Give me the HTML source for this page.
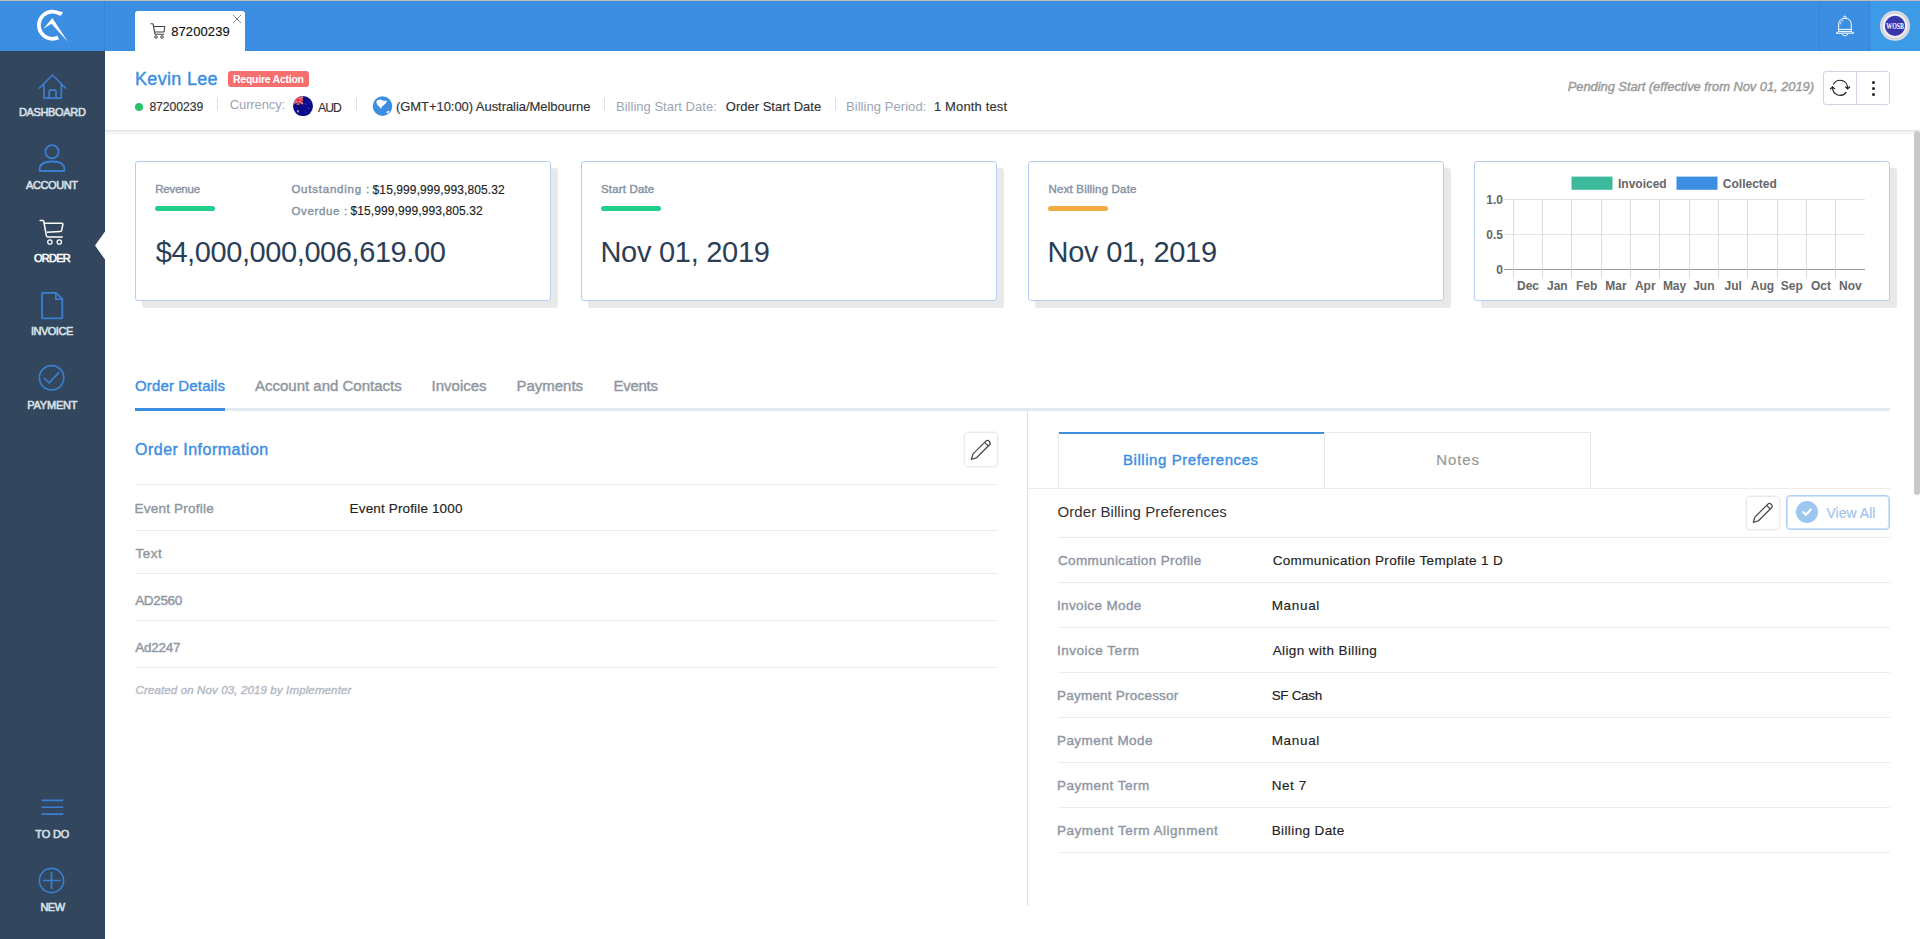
<!DOCTYPE html>
<html><head><meta charset="utf-8"><title>Order 87200239</title>
<style>
html,body{margin:0;padding:0;width:1920px;height:939px;overflow:hidden;background:#fff;font-family:"Liberation Sans",sans-serif}
body>div,body>svg,body>span{position:absolute;display:block}
.t{white-space:nowrap;line-height:1}
.ct{white-space:nowrap;line-height:1;font-weight:700}
</style></head><body>
<div style="left:0px;top:0px;width:1920px;height:1px;background:#c2baba"></div>
<div style="left:0px;top:1px;width:1920px;height:50px;background:#3b8ee2"></div>
<div style="left:1870px;top:1px;width:50px;height:50px;background:#3c9ae6"></div>
<div style="left:104px;top:1px;width:1px;height:50px;background:#3583d2"></div>
<div style="left:1819px;top:1px;width:1px;height:50px;background:#3583d2"></div>
<div style="left:1869px;top:1px;width:1px;height:50px;background:#3583d2"></div>
<div style="left:0px;top:51px;width:104px;height:888px;background:#32475e"></div>
<div style="left:104px;top:51px;width:1px;height:888px;background:#32475e"></div>
<svg style="left:94px;top:231px" width="11" height="29"><path d="M11 0.5 L1 14.5 L11 28.5 Z" fill="#fff"/></svg>
<div style="left:135px;top:11px;width:110px;height:40px;background:#fff;border-radius:3px 3px 0 0"></div>
<div style="left:105px;top:130px;width:1815px;height:1px;background:#e1e7ed"></div>
<div style="left:105px;top:131px;width:1815px;height:5px;background:linear-gradient(#efefef,rgba(255,255,255,0))"></div>
<div style="left:1914px;top:131px;width:6px;height:364px;background:#c9c9c9;border-radius:3px"></div>
<div style="left:228px;top:71px;width:81px;height:16px;background:#f56f6f;border-radius:3px"></div>
<div style="left:135px;top:103px;width:8px;height:8px;background:#27c46b;border-radius:50%"></div>
<div style="left:217px;top:98px;width:1px;height:12px;background:#dcdcdc"></div>
<div style="left:356px;top:98px;width:1px;height:12px;background:#dcdcdc"></div>
<div style="left:604px;top:98px;width:1px;height:12px;background:#dcdcdc"></div>
<div style="left:835px;top:98px;width:1px;height:12px;background:#dcdcdc"></div>
<div style="left:1823px;top:71px;width:67px;height:34px;border:1px solid #cdd4e2;border-radius:3px;box-sizing:border-box"></div>
<div style="left:1856px;top:71px;width:1px;height:34px;background:#cdd4e2"></div>
<div style="left:142px;top:168px;width:416px;height:140px;background:#e9e9e9;border-radius:3px"></div>
<div style="left:135px;top:161px;width:416px;height:140px;background:#fff;border:1px solid #b5cdf3;border-radius:3px;box-sizing:border-box"></div>
<div style="left:588px;top:168px;width:416px;height:140px;background:#e9e9e9;border-radius:3px"></div>
<div style="left:581px;top:161px;width:416px;height:140px;background:#fff;border:1px solid #b5cdf3;border-radius:3px;box-sizing:border-box"></div>
<div style="left:1035px;top:168px;width:416px;height:140px;background:#e9e9e9;border-radius:3px"></div>
<div style="left:1028px;top:161px;width:416px;height:140px;background:#fff;border:1px solid #b5cdf3;border-radius:3px;box-sizing:border-box"></div>
<div style="left:1481px;top:168px;width:416px;height:140px;background:#e9e9e9;border-radius:3px"></div>
<div style="left:1474px;top:161px;width:416px;height:140px;background:#fff;border:1px solid #b5cdf3;border-radius:3px;box-sizing:border-box"></div>
<div style="left:155px;top:206px;width:60px;height:5px;background:#22d08e;border-radius:3px"></div>
<div style="left:601px;top:206px;width:60px;height:5px;background:#22d08e;border-radius:3px"></div>
<div style="left:1048px;top:206px;width:60px;height:5px;background:#f2ab42;border-radius:3px"></div>
<div style="left:135px;top:408px;width:1755px;height:3px;background:#e4e9f1"></div>
<div style="left:135px;top:408px;width:90px;height:3px;background:#3b8ee2"></div>
<div style="left:964px;top:432px;width:34px;height:35px;border:1px solid #eaeaea;box-shadow:0 0 0 1px #f6f6f6;border-radius:4px;box-sizing:border-box"></div>
<div style="left:135px;top:484px;width:863px;height:1px;background:#ececec"></div>
<div style="left:135px;top:530px;width:863px;height:1px;background:#ececec"></div>
<div style="left:135px;top:573px;width:863px;height:1px;background:#ececec"></div>
<div style="left:135px;top:620px;width:863px;height:1px;background:#ececec"></div>
<div style="left:135px;top:667px;width:863px;height:1px;background:#ececec"></div>
<div style="left:1027px;top:411px;width:1px;height:495px;background:#dde1e6"></div>
<div style="left:1058px;top:432px;width:267px;height:57px;border:1px solid #e8e8e8;border-bottom:none;box-sizing:border-box"></div>
<div style="left:1324px;top:432px;width:267px;height:57px;border:1px solid #e8e8e8;border-bottom:none;box-sizing:border-box"></div>
<div style="left:1059px;top:432px;width:265px;height:2px;background:#3b8ee2"></div>
<div style="left:1028px;top:488px;width:862px;height:1px;background:#ececec"></div>
<div style="left:1746px;top:496px;width:34px;height:34px;border:1px solid #eaeaea;box-shadow:0 0 0 1px #f6f6f6;border-radius:4px;box-sizing:border-box"></div>
<div style="left:1786px;top:495px;width:104px;height:35px;border:1px solid #aecff3;box-shadow:inset 0 0 0 1px #cfe4f9;border-radius:4px;box-sizing:border-box"></div>
<div style="left:1796px;top:501px;width:22px;height:22px;background:#9ec7f0;border-radius:50%"></div>
<svg style="left:1800px;top:505px" width="14" height="14"><path d="M3.2 7.2 L6 9.8 L10.8 4.6" stroke="#fff" stroke-width="2.2" fill="none" stroke-linecap="round" stroke-linejoin="round"/></svg>
<div style="left:1058px;top:537px;width:832px;height:1px;background:#ececec"></div>
<div style="left:1058px;top:582px;width:832px;height:1px;background:#ececec"></div>
<div style="left:1058px;top:627px;width:832px;height:1px;background:#ececec"></div>
<div style="left:1058px;top:672px;width:832px;height:1px;background:#ececec"></div>
<div style="left:1058px;top:717px;width:832px;height:1px;background:#ececec"></div>
<div style="left:1058px;top:762px;width:832px;height:1px;background:#ececec"></div>
<div style="left:1058px;top:807px;width:832px;height:1px;background:#ececec"></div>
<div style="left:1058px;top:852px;width:832px;height:1px;background:#ececec"></div>
<svg style="left:30px;top:6px" width="45" height="40" viewBox="0 0 45 40">
<path d="M30.4 8.13 A13.6 13.6 0 1 0 28.25 31.5" stroke="#fff" stroke-width="3.7" fill="none"/>
<path d="M28 5.3 L33 6 L30.8 10.3 Z" fill="#fff"/>
<path d="M13.47 22.85 L22.4 12.06 L37.85 35.74 L21.44 17.69 Z" fill="#fff"/>
</svg>
<svg style="left:149px;top:22px" width="18" height="18" viewBox="0 0 18 18">
<path d="M1.5 1.8 L4 1.8 L6 12.2 L15 12.2 M4.6 4.5 L15.8 4.5 L15 10 L5.6 10" stroke="#444" stroke-width="1.1" fill="none" stroke-linejoin="round"/>
<circle cx="7" cy="15" r="1.3" stroke="#444" stroke-width="1" fill="none"/><circle cx="13" cy="15" r="1.3" stroke="#444" stroke-width="1" fill="none"/>
</svg>
<svg style="left:232px;top:14px" width="10" height="10"><path d="M1 1 L9 9 M9 1 L1 9" stroke="#888" stroke-width="1" fill="none"/></svg>
<svg style="left:36px;top:71px" width="33" height="30" viewBox="0 0 33 30">
<path d="M3.5 17 L16.5 4 L29.5 17" stroke="#3b7fd0" stroke-width="1.7" fill="none" stroke-linecap="round" stroke-linejoin="round"/>
<path d="M7.9 13 L7.9 26.2 Q7.9 27.2 8.9 27.2 L24.3 27.2 Q25.3 27.2 25.3 26.2 L25.3 13" stroke="#3b7fd0" stroke-width="1.7" fill="none"/>
<path d="M13.2 27 L13.2 20 Q13.2 19.2 14 19.2 L19.2 19.2 Q20 19.2 20 20 L20 27" stroke="#3b7fd0" stroke-width="1.7" fill="none"/>
</svg>
<svg style="left:35.6px;top:141px" width="33" height="33" viewBox="0 0 33 33">
<circle cx="16" cy="10.7" r="6.6" stroke="#3b7fd0" stroke-width="1.8" fill="none"/>
<path d="M3.5 29 Q3.5 20.5 16 20.5 Q28.5 20.5 28.5 29 Q28.5 30 27.5 30 L4.5 30 Q3.5 30 3.5 29 Z" stroke="#3b7fd0" stroke-width="1.8" fill="none"/>
</svg>
<svg style="left:36px;top:216px" width="32" height="32" viewBox="0 0 32 32">
<path d="M4.1 4.5 L6.8 4.5 Q7.6 4.6 7.8 5.5 L10.3 19.4 Q10.5 21 12 21 L26.2 21" stroke="#fff" stroke-width="1.5" fill="none" stroke-linecap="round"/>
<path d="M8.6 7.2 L25.8 7.2 Q27 7.4 26.8 8.6 L25.8 14.2 Q25.5 15.5 24.3 15.5 L10.9 16.3" stroke="#fff" stroke-width="1.5" fill="none"/>
<circle cx="13.9" cy="26" r="2.2" stroke="#fff" stroke-width="1.25" fill="none"/><circle cx="23.3" cy="26" r="2.2" stroke="#fff" stroke-width="1.25" fill="none"/>
</svg>
<svg style="left:36px;top:287.6px" width="32" height="34" viewBox="0 0 32 34">
<path d="M6 5.5 Q6 4.8 6.7 4.8 L20 4.8 L26.3 11 L26.3 29.5 Q26.3 30.3 25.5 30.3 L6.8 30.3 Q6 30.3 6 29.5 Z" stroke="#3b7fd0" stroke-width="1.8" fill="none" stroke-linejoin="round"/>
<path d="M19.8 5 L19.8 11.2 L26 11.2" stroke="#3b7fd0" stroke-width="1.6" fill="none"/>
</svg>
<svg style="left:36px;top:362px" width="32" height="32" viewBox="0 0 32 32">
<circle cx="15.6" cy="15.8" r="12.2" stroke="#3b7fd0" stroke-width="1.6" fill="none"/>
<path d="M8.3 16.2 L13 20.8 L22.8 10.6" stroke="#3b7fd0" stroke-width="1.6" fill="none" stroke-linecap="round"/>
</svg>
<svg style="left:36px;top:795px" width="32" height="24" viewBox="0 0 32 24">
<path d="M5.6 5.4 L27.3 5.4 M5.6 12.3 L27.3 12.3 M5.6 19.1 L27.3 19.1" stroke="#3b7fd0" stroke-width="1.6" fill="none"/>
</svg>
<svg style="left:36px;top:865px" width="32" height="32" viewBox="0 0 32 32">
<circle cx="15.5" cy="15.5" r="12.1" stroke="#3b7fd0" stroke-width="1.6" fill="none"/>
<path d="M6.9 15.5 L24.6 15.5 M15.5 7 L15.5 24" stroke="#3b7fd0" stroke-width="1.7" fill="none"/>
</svg>
<svg style="left:1833px;top:13px" width="24" height="26" viewBox="0 0 24 26">
<circle cx="11.9" cy="4.3" r="1.25" stroke="#fff" stroke-width="0.9" fill="none"/>
<path d="M5.6 18.7 L5.6 12 Q5.6 5.3 11.9 5.3 Q18.3 5.3 18.3 12 L18.3 18.7" stroke="#fff" stroke-width="1" fill="none"/>
<path d="M7.2 11.5 Q7.5 7.6 10.5 7.1" stroke="#fff" stroke-width="0.7" fill="none"/>
<path d="M5.6 16.4 L18.3 16.4 M5.6 18.6 L18.3 18.6 L20.9 20.2 L3.1 20.2 Z" stroke="#fff" stroke-width="1" fill="none" stroke-linejoin="round"/>
<path d="M8.9 20.4 Q9.4 22.9 11.9 22.9 Q14.4 22.9 14.9 20.4" stroke="#fff" stroke-width="1" fill="none"/>
</svg>
<svg style="left:1879px;top:10px" width="32" height="32" viewBox="0 0 32 32">
<circle cx="16" cy="15.8" r="15" fill="#dedee6"/><circle cx="16" cy="15.8" r="13" stroke="#b4b4bc" stroke-width="0.8" stroke-dasharray="1.2 0.8" fill="none"/>
<circle cx="16" cy="15.8" r="12" fill="#f0f0f4"/><circle cx="16" cy="15.8" r="10.1" fill="#3636aa"/>
<text x="7.3" y="19.1" font-family="Liberation Serif" font-weight="700" font-size="8.6" fill="#fff" textLength="17.6" lengthAdjust="spacingAndGlyphs">WOSB</text>
</svg>
<svg style="left:293px;top:96px" width="20" height="20" viewBox="0 0 20 20">
<defs><clipPath id="fc"><circle cx="10" cy="10.1" r="10"/></clipPath></defs>
<g clip-path="url(#fc)"><rect width="20" height="20" fill="#0c0c88"/>
<path d="M0 0.5 L10 8 M10 0.5 L0 8" stroke="#f08080" stroke-width="1.8"/>
<path d="M5 0 L5 9 M0 4 L10 4" stroke="#f7a0a0" stroke-width="2.6"/><path d="M5 0 L5 9 M0 4 L10 4" stroke="#ee2030" stroke-width="1.5"/>
<path d="M0 8.5 L3 6" stroke="#6c6cc0" stroke-width="0.8"/>
<ellipse cx="5" cy="15.3" rx="0.7" ry="1.4" fill="#c8c8ee"/><circle cx="13" cy="8" r="0.6" fill="#8888cc"/><circle cx="16" cy="6" r="0.6" fill="#6a6ac0"/><circle cx="15.3" cy="12" r="0.6" fill="#6a6ac0"/><circle cx="12.5" cy="16" r="0.5" fill="#6a6ac0"/></g>
</svg>
<svg style="left:372px;top:96px" width="21" height="21" viewBox="0 0 21 21">
<circle cx="10.5" cy="10.1" r="9.8" fill="#3b8ee2"/>
<path d="M4.6 5 Q5.5 3.6 7.7 3.4 L10 3.9 Q11 4.6 12 4.9 L13.6 4.6 Q15.2 5.2 14.6 6.6 Q13.8 7.6 12.4 8.6 Q11 9.4 10.2 10.6 Q9.6 11.6 8.6 12.8 Q7.6 11.2 7.1 10.2 Q5.8 9.4 5.1 8.4 Q4.2 6.8 4.6 5 Z" fill="#fff"/>
<ellipse cx="15.9" cy="16" rx="1.5" ry="0.9" transform="rotate(-40 15.9 16)" fill="#fff"/>
</svg>
<svg style="left:1829px;top:77px" width="22" height="22" viewBox="0 0 22 22">
<path d="M4.3 7.63 A7.5 7.5 0 0 1 18.6 11.06" stroke="#1a1a1a" stroke-width="1.15" fill="none"/>
<path d="M16.3 9.7 L18.6 12 L21 9.5" stroke="#1a1a1a" stroke-width="1.15" fill="none" stroke-linejoin="miter"/>
<path d="M17.25 15.1 A7.5 7.5 0 0 1 3.6 10.8" stroke="#1a1a1a" stroke-width="1.15" fill="none"/>
<path d="M1.2 12.4 L3.5 9.9 L6 12.1" stroke="#1a1a1a" stroke-width="1.15" fill="none"/>
</svg>
<div style="left:1871.5px;top:80.5px;width:3px;height:3px;background:#222;border-radius:50%"></div>
<div style="left:1871.5px;top:87.0px;width:3px;height:3px;background:#222;border-radius:50%"></div>
<div style="left:1871.5px;top:93.1px;width:3px;height:3px;background:#222;border-radius:50%"></div>
<svg style="left:969px;top:438px" width="24" height="24" viewBox="0 0 24 24">
<g transform="translate(12 12) scale(1.22) translate(-12 -12)">
<path d="M5.5 15.2 L15.8 4.9 Q17.3 3.4 18.8 4.9 Q20.3 6.4 18.8 7.9 L8.5 18.2 L4.6 19.6 Q4 19.8 4.2 19.2 Z" stroke="#4a4a4a" stroke-width="1.05" fill="none" stroke-linejoin="round"/>
<path d="M15 5.8 L17.9 8.7" stroke="#4a4a4a" stroke-width="1" fill="none"/></g>
</svg>
<svg style="left:1751px;top:501px" width="24" height="24" viewBox="0 0 24 24">
<g transform="translate(12 12) scale(1.22) translate(-12 -12)">
<path d="M5.5 15.2 L15.8 4.9 Q17.3 3.4 18.8 4.9 Q20.3 6.4 18.8 7.9 L8.5 18.2 L4.6 19.6 Q4 19.8 4.2 19.2 Z" stroke="#4a4a4a" stroke-width="1.05" fill="none" stroke-linejoin="round"/>
<path d="M15 5.8 L17.9 8.7" stroke="#4a4a4a" stroke-width="1" fill="none"/></g>
</svg>
<svg style="left:1474px;top:161px" width="416" height="140" viewBox="0 0 416 140">
<rect x="97.5" y="15.6" width="41" height="13.2" fill="#3cb89b"/>
<rect x="202.5" y="15.6" width="41" height="13.2" fill="#3b8ee2"/>
<line x1="30" y1="38.5" x2="391" y2="38.5" stroke="#e3e3e3" stroke-width="1"/>
<line x1="30" y1="73.5" x2="391" y2="73.5" stroke="#e3e3e3" stroke-width="1"/>
<line x1="30" y1="108.5" x2="391" y2="108.5" stroke="#9a9a9a" stroke-width="1"/>
<line x1="39.5" y1="38.5" x2="39.5" y2="118.0" stroke="#dcdcdc" stroke-width="1"/>
<line x1="68.5" y1="38.5" x2="68.5" y2="118.0" stroke="#dcdcdc" stroke-width="1"/>
<line x1="97.5" y1="38.5" x2="97.5" y2="118.0" stroke="#dcdcdc" stroke-width="1"/>
<line x1="127.5" y1="38.5" x2="127.5" y2="118.0" stroke="#dcdcdc" stroke-width="1"/>
<line x1="156.5" y1="38.5" x2="156.5" y2="118.0" stroke="#dcdcdc" stroke-width="1"/>
<line x1="185.5" y1="38.5" x2="185.5" y2="118.0" stroke="#dcdcdc" stroke-width="1"/>
<line x1="215.5" y1="38.5" x2="215.5" y2="118.0" stroke="#dcdcdc" stroke-width="1"/>
<line x1="244.5" y1="38.5" x2="244.5" y2="118.0" stroke="#dcdcdc" stroke-width="1"/>
<line x1="273.5" y1="38.5" x2="273.5" y2="118.0" stroke="#dcdcdc" stroke-width="1"/>
<line x1="303.5" y1="38.5" x2="303.5" y2="118.0" stroke="#dcdcdc" stroke-width="1"/>
<line x1="332.5" y1="38.5" x2="332.5" y2="118.0" stroke="#dcdcdc" stroke-width="1"/>
<line x1="361.5" y1="38.5" x2="361.5" y2="118.0" stroke="#dcdcdc" stroke-width="1"/>
</svg>
<span class="ct" style="left:1618px;top:177.6px;font-size:12px;color:#666">Invoiced</span>
<span class="ct" style="left:1722.8px;top:177.6px;font-size:12px;color:#666">Collected</span>
<span class="ct" style="left:1383px;top:194.2px;width:120px;text-align:right;font-size:12px;color:#666">1.0</span>
<span class="ct" style="left:1383px;top:228.9px;width:120px;text-align:right;font-size:12px;color:#666">0.5</span>
<span class="ct" style="left:1383px;top:263.6px;width:120px;text-align:right;font-size:12px;color:#666">0</span>
<span class="ct" style="left:1468.0500000000002px;top:280.0px;width:120px;text-align:center;font-size:12px;color:#666">Dec</span>
<span class="ct" style="left:1497.3500000000001px;top:280.0px;width:120px;text-align:center;font-size:12px;color:#666">Jan</span>
<span class="ct" style="left:1526.65px;top:280.0px;width:120px;text-align:center;font-size:12px;color:#666">Feb</span>
<span class="ct" style="left:1555.95px;top:280.0px;width:120px;text-align:center;font-size:12px;color:#666">Mar</span>
<span class="ct" style="left:1585.25px;top:280.0px;width:120px;text-align:center;font-size:12px;color:#666">Apr</span>
<span class="ct" style="left:1614.5500000000002px;top:280.0px;width:120px;text-align:center;font-size:12px;color:#666">May</span>
<span class="ct" style="left:1643.8500000000001px;top:280.0px;width:120px;text-align:center;font-size:12px;color:#666">Jun</span>
<span class="ct" style="left:1673.15px;top:280.0px;width:120px;text-align:center;font-size:12px;color:#666">Jul</span>
<span class="ct" style="left:1702.45px;top:280.0px;width:120px;text-align:center;font-size:12px;color:#666">Aug</span>
<span class="ct" style="left:1731.75px;top:280.0px;width:120px;text-align:center;font-size:12px;color:#666">Sep</span>
<span class="ct" style="left:1761.0500000000002px;top:280.0px;width:120px;text-align:center;font-size:12px;color:#666">Oct</span>
<span class="ct" style="left:1790.3500000000001px;top:280.0px;width:120px;text-align:center;font-size:12px;color:#666">Nov</span>
<span class="t" style="left:18.9px;top:107.3px;font-size:11px;font-weight:400;font-style:normal;color:#dde2e8;letter-spacing:-0.338px;-webkit-text-stroke:0.55px #dde2e8">DASHBOARD</span>
<span class="t" style="left:26.0px;top:180.3px;font-size:11px;font-weight:400;font-style:normal;color:#dde2e8;letter-spacing:-0.383px;-webkit-text-stroke:0.55px #dde2e8">ACCOUNT</span>
<span class="t" style="left:34.0px;top:253.3px;font-size:11px;font-weight:400;font-style:normal;color:#ffffff;letter-spacing:-0.75px;-webkit-text-stroke:0.55px #ffffff">ORDER</span>
<span class="t" style="left:30.9px;top:326.3px;font-size:11px;font-weight:400;font-style:normal;color:#dde2e8;letter-spacing:-0.483px;-webkit-text-stroke:0.55px #dde2e8">INVOICE</span>
<span class="t" style="left:27.3px;top:400.0px;font-size:11px;font-weight:400;font-style:normal;color:#dde2e8;letter-spacing:-0.233px;-webkit-text-stroke:0.55px #dde2e8">PAYMENT</span>
<span class="t" style="left:35.3px;top:829.0px;font-size:11px;font-weight:400;font-style:normal;color:#dde2e8;letter-spacing:-0.175px;-webkit-text-stroke:0.55px #dde2e8">TO DO</span>
<span class="t" style="left:40.4px;top:902.3px;font-size:11px;font-weight:400;font-style:normal;color:#dde2e8;letter-spacing:-0.5px;-webkit-text-stroke:0.55px #dde2e8">NEW</span>
<span class="t" style="left:171.2px;top:25.2px;font-size:13px;font-weight:400;font-style:normal;color:#111111;letter-spacing:0.107px;-webkit-text-stroke:0.15px #111111">87200239</span>
<span class="t" style="left:135.0px;top:70.0px;font-size:18px;font-weight:400;font-style:normal;color:#3b8ee2;letter-spacing:0.312px;-webkit-text-stroke:0.4px #3b8ee2">Kevin Lee</span>
<span class="t" style="left:233.0px;top:74.1px;font-size:10.5px;font-weight:700;font-style:normal;color:#ffffff;letter-spacing:-0.25px">Require Action</span>
<span class="t" style="left:149.4px;top:100.6px;font-size:12.2px;font-weight:400;font-style:normal;color:#333333;letter-spacing:-0.057px;-webkit-text-stroke:0.15px #333333">87200239</span>
<span class="t" style="left:229.8px;top:97.8px;font-size:13px;font-weight:400;font-style:normal;color:#9da5b4;letter-spacing:-0.125px">Currency:</span>
<span class="t" style="left:318.0px;top:101.5px;font-size:12.2px;font-weight:400;font-style:normal;color:#333333;letter-spacing:-1.0px;-webkit-text-stroke:0.15px #333333">AUD</span>
<span class="t" style="left:396.0px;top:100.2px;font-size:13px;font-weight:400;font-style:normal;color:#333333;letter-spacing:-0.057px;-webkit-text-stroke:0.15px #333333">(GMT+10:00) Australia/Melbourne</span>
<span class="t" style="left:616.0px;top:100.2px;font-size:13px;font-weight:400;font-style:normal;color:#9da5b4;letter-spacing:0.017px">Billing Start Date:</span>
<span class="t" style="left:725.8px;top:100.2px;font-size:13px;font-weight:400;font-style:normal;color:#333333;letter-spacing:0.0px;-webkit-text-stroke:0.15px #333333">Order Start Date</span>
<span class="t" style="left:846.0px;top:100.2px;font-size:13px;font-weight:400;font-style:normal;color:#9da5b4;letter-spacing:0.057px">Billing Period:</span>
<span class="t" style="left:934.0px;top:100.2px;font-size:13px;font-weight:400;font-style:normal;color:#333333;letter-spacing:0.136px;-webkit-text-stroke:0.15px #333333">1 Month test</span>
<span class="t" style="left:1567.7px;top:80.0px;font-size:13px;font-weight:400;font-style:italic;color:#9a9a9a;letter-spacing:-0.088px;-webkit-text-stroke:0.4px #9a9a9a">Pending Start (effective from Nov 01, 2019)</span>
<span class="t" style="left:155.2px;top:184.0px;font-size:11.5px;font-weight:400;font-style:normal;color:#8592a3;letter-spacing:-0.167px;-webkit-text-stroke:0.4px #8592a3">Revenue</span>
<span class="t" style="left:291.4px;top:184.2px;font-size:11.5px;font-weight:400;font-style:normal;color:#8592a3;letter-spacing:0.775px;-webkit-text-stroke:0.4px #8592a3">Outstanding :</span>
<span class="t" style="left:372.6px;top:183.5px;font-size:12px;font-weight:400;font-style:normal;color:#222222;letter-spacing:0.095px;-webkit-text-stroke:0.15px #222222">$15,999,999,993,805.32</span>
<span class="t" style="left:291.4px;top:206.1px;font-size:11.5px;font-weight:400;font-style:normal;color:#8592a3;letter-spacing:0.65px;-webkit-text-stroke:0.4px #8592a3">Overdue :</span>
<span class="t" style="left:350.5px;top:205.1px;font-size:12px;font-weight:400;font-style:normal;color:#222222;letter-spacing:0.095px;-webkit-text-stroke:0.15px #222222">$15,999,999,993,805.32</span>
<span class="t" style="left:155.7px;top:237.5px;font-size:29px;font-weight:400;font-style:normal;color:#2b3e55;letter-spacing:-0.41px">$4,000,000,006,619.00</span>
<span class="t" style="left:601.0px;top:184.2px;font-size:11.5px;font-weight:400;font-style:normal;color:#8592a3;letter-spacing:0.156px;-webkit-text-stroke:0.4px #8592a3">Start Date</span>
<span class="t" style="left:600.4px;top:237.6px;font-size:29px;font-weight:400;font-style:normal;color:#2b3e55;letter-spacing:-0.273px">Nov 01, 2019</span>
<span class="t" style="left:1048.6px;top:184.2px;font-size:11.5px;font-weight:400;font-style:normal;color:#8592a3;letter-spacing:0.175px;-webkit-text-stroke:0.4px #8592a3">Next Billing Date</span>
<span class="t" style="left:1047.6px;top:237.6px;font-size:29px;font-weight:400;font-style:normal;color:#2b3e55;letter-spacing:-0.273px">Nov 01, 2019</span>
<span class="t" style="left:135.0px;top:377.6px;font-size:15px;font-weight:400;font-style:normal;color:#3b8ee2;letter-spacing:0.142px;-webkit-text-stroke:0.4px #3b8ee2">Order Details</span>
<span class="t" style="left:255.0px;top:377.6px;font-size:15px;font-weight:400;font-style:normal;color:#8e96a0;letter-spacing:-0.005px;-webkit-text-stroke:0.4px #8e96a0">Account and Contacts</span>
<span class="t" style="left:431.5px;top:377.6px;font-size:15px;font-weight:400;font-style:normal;color:#8e96a0;letter-spacing:0.014px;-webkit-text-stroke:0.4px #8e96a0">Invoices</span>
<span class="t" style="left:516.5px;top:377.6px;font-size:15px;font-weight:400;font-style:normal;color:#8e96a0;letter-spacing:-0.014px;-webkit-text-stroke:0.4px #8e96a0">Payments</span>
<span class="t" style="left:613.4px;top:377.6px;font-size:15px;font-weight:400;font-style:normal;color:#8e96a0;letter-spacing:-0.26px;-webkit-text-stroke:0.4px #8e96a0">Events</span>
<span class="t" style="left:135.0px;top:441.7px;font-size:16px;font-weight:400;font-style:normal;color:#3b8ee2;letter-spacing:0.488px;-webkit-text-stroke:0.4px #3b8ee2">Order Information</span>
<span class="t" style="left:134.5px;top:501.8px;font-size:13.5px;font-weight:400;font-style:normal;color:#8e97a3;letter-spacing:0.225px;-webkit-text-stroke:0.4px #8e97a3">Event Profile</span>
<span class="t" style="left:349.6px;top:501.8px;font-size:13.5px;font-weight:400;font-style:normal;color:#222222;letter-spacing:0.147px;-webkit-text-stroke:0.15px #222222">Event Profile 1000</span>
<span class="t" style="left:135.5px;top:547.4px;font-size:13.5px;font-weight:400;font-style:normal;color:#8e97a3;letter-spacing:0.467px;-webkit-text-stroke:0.4px #8e97a3">Text</span>
<span class="t" style="left:135.2px;top:593.7px;font-size:13.5px;font-weight:400;font-style:normal;color:#8e97a3;letter-spacing:-0.34px;-webkit-text-stroke:0.4px #8e97a3">AD2560</span>
<span class="t" style="left:135.2px;top:641.0px;font-size:13.5px;font-weight:400;font-style:normal;color:#8e97a3;letter-spacing:-0.24px;-webkit-text-stroke:0.4px #8e97a3">Ad2247</span>
<span class="t" style="left:135.5px;top:684.7px;font-size:11.5px;font-weight:400;font-style:italic;color:#b3bac4;letter-spacing:0.132px;-webkit-text-stroke:0.4px #b3bac4">Created on Nov 03, 2019 by Implementer</span>
<span class="t" style="left:1123.0px;top:451.8px;font-size:15px;font-weight:400;font-style:normal;color:#3b8ee2;letter-spacing:0.556px;-webkit-text-stroke:0.4px #3b8ee2">Billing Preferences</span>
<span class="t" style="left:1436.2px;top:452.3px;font-size:15px;font-weight:400;font-style:normal;color:#999999;letter-spacing:0.9px;-webkit-text-stroke:0.2px #999999">Notes</span>
<span class="t" style="left:1057.5px;top:504.4px;font-size:15px;font-weight:400;font-style:normal;color:#333333;letter-spacing:0.075px">Order Billing Preferences</span>
<span class="t" style="left:1826.4px;top:505.5px;font-size:14px;font-weight:400;font-style:normal;color:#9cc4ee;letter-spacing:0.043px;-webkit-text-stroke:0.15px #9cc4ee">View All</span>
<span class="t" style="left:1058.0px;top:553.7px;font-size:13.5px;font-weight:400;font-style:normal;color:#8e97a3;letter-spacing:0.37px;-webkit-text-stroke:0.4px #8e97a3">Communication Profile</span>
<span class="t" style="left:1272.7px;top:553.7px;font-size:13.5px;font-weight:400;font-style:normal;color:#222222;letter-spacing:0.339px;-webkit-text-stroke:0.15px #222222">Communication Profile Template 1 D</span>
<span class="t" style="left:1057.0px;top:598.8px;font-size:13.5px;font-weight:400;font-style:normal;color:#8e97a3;letter-spacing:0.364px;-webkit-text-stroke:0.4px #8e97a3">Invoice Mode</span>
<span class="t" style="left:1271.7px;top:598.8px;font-size:13.5px;font-weight:400;font-style:normal;color:#222222;letter-spacing:0.68px;-webkit-text-stroke:0.15px #222222">Manual</span>
<span class="t" style="left:1057.0px;top:643.9px;font-size:13.5px;font-weight:400;font-style:normal;color:#8e97a3;letter-spacing:0.509px;-webkit-text-stroke:0.4px #8e97a3">Invoice Term</span>
<span class="t" style="left:1272.7px;top:643.9px;font-size:13.5px;font-weight:400;font-style:normal;color:#222222;letter-spacing:0.388px;-webkit-text-stroke:0.15px #222222">Align with Billing</span>
<span class="t" style="left:1057.0px;top:688.9px;font-size:13.5px;font-weight:400;font-style:normal;color:#8e97a3;letter-spacing:0.219px;-webkit-text-stroke:0.4px #8e97a3">Payment Processor</span>
<span class="t" style="left:1271.7px;top:688.9px;font-size:13.5px;font-weight:400;font-style:normal;color:#222222;letter-spacing:-0.333px;-webkit-text-stroke:0.15px #222222">SF Cash</span>
<span class="t" style="left:1057.0px;top:733.9px;font-size:13.5px;font-weight:400;font-style:normal;color:#8e97a3;letter-spacing:0.427px;-webkit-text-stroke:0.4px #8e97a3">Payment Mode</span>
<span class="t" style="left:1271.7px;top:733.9px;font-size:13.5px;font-weight:400;font-style:normal;color:#222222;letter-spacing:0.68px;-webkit-text-stroke:0.15px #222222">Manual</span>
<span class="t" style="left:1057.0px;top:778.9px;font-size:13.5px;font-weight:400;font-style:normal;color:#8e97a3;letter-spacing:0.491px;-webkit-text-stroke:0.4px #8e97a3">Payment Term</span>
<span class="t" style="left:1271.7px;top:778.9px;font-size:13.5px;font-weight:400;font-style:normal;color:#222222;letter-spacing:0.575px;-webkit-text-stroke:0.15px #222222">Net 7</span>
<span class="t" style="left:1057.0px;top:823.9px;font-size:13.5px;font-weight:400;font-style:normal;color:#8e97a3;letter-spacing:0.519px;-webkit-text-stroke:0.4px #8e97a3">Payment Term Alignment</span>
<span class="t" style="left:1271.7px;top:823.9px;font-size:13.5px;font-weight:400;font-style:normal;color:#222222;letter-spacing:0.391px;-webkit-text-stroke:0.15px #222222">Billing Date</span>
</body></html>
